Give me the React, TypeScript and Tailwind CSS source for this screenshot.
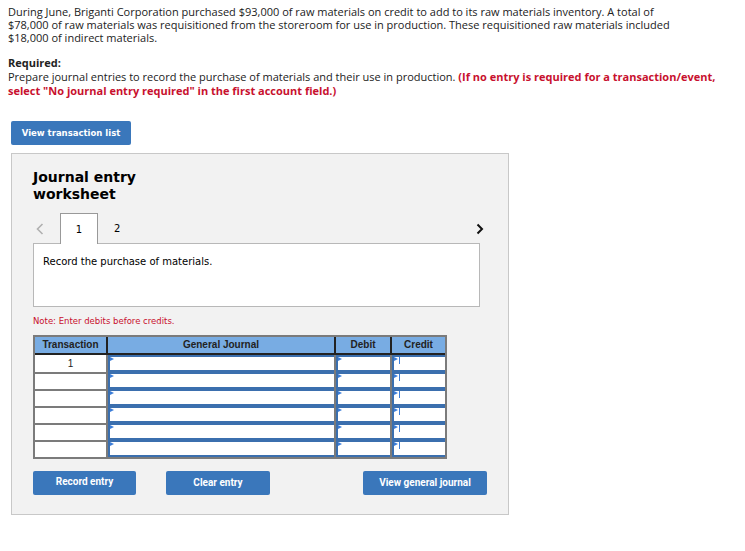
import { Fragment } from "react";

const rows = [1, 2, 3, 4, 5, 6];

function InputCell({ credit }: { credit?: boolean }) {
  return (
    <div className="relative h-[17px] w-full border-t-2 border-b-2 border-l-2 border-[#3b6fae] bg-white">
      <span className="absolute left-0 top-0 h-0 w-0 border-y-[2px] border-l-[4px] border-y-transparent border-l-[#3b7dd8]" />
      {credit && <span className="absolute left-[5px] top-0 h-[7px] w-px bg-[#3b7dd8]" />}
    </div>
  );
}

export default function App() {
  return (
    <div className="min-h-[551px] w-[745px] bg-white font-['Open_Sans',sans-serif] text-[11px] text-[#222]">
      <div className="whitespace-nowrap px-2 pt-[5px]">
        <p className="leading-[13px]">
          During June, Briganti Corporation purchased $93,000 of raw materials on credit to add to its raw materials
          inventory. A total of
          <br />
          $78,000 of raw materials was requisitioned from the storeroom for use in production. These requisitioned
          raw materials included
          <br />
          $18,000 of indirect materials.
        </p>
        <p className="mt-[12px] font-bold leading-[14px]">Required:</p>
        <p className="leading-[14px]">
          Prepare journal entries to record the purchase of materials and their use in production.{" "}
          <span className="font-bold text-[#c8102e]">
            (If no entry is required for a transaction/event,
            <br />
            select "No journal entry required" in the first account field.)
          </span>
        </p>
      </div>

      <div className="pl-[11px] pt-[23px]">
        <button className="h-[24px] w-[120px] rounded-[2px] bg-[#3a77bb] font-['DejaVu_Sans',sans-serif] text-[8.5px] font-bold text-white">
          View transaction list
        </button>

        <div className="mt-[8px] h-[362px] w-[498px] border border-[#c8c8c8] bg-[#f2f2f2] px-[21px] pt-[15px]">
          <h2 className="font-['DejaVu_Sans',sans-serif] text-[14px] font-bold leading-[17px] text-black">
            Journal entry
            <br />
            worksheet
          </h2>

          <div className="mt-[10px] flex h-[31px] w-[447px] items-center">
            <svg width="8" height="12" viewBox="0 0 8 12" className="ml-[3px] mr-[16px]">
              <path d="M6.5 1 L1.5 6 L6.5 11" fill="none" stroke="#b0b0b0" strokeWidth="1.6" />
            </svg>
            <div className="flex h-[31px] w-[38px] items-center justify-center border border-b-0 border-[#999] bg-white font-['DejaVu_Sans',sans-serif] text-[10px] text-black">
              1
            </div>
            <span className="ml-[16px] font-['DejaVu_Sans',sans-serif] text-[10px] text-black">2</span>
            <svg width="8" height="12" viewBox="0 0 8 12" className="ml-auto mr-[-4px]">
              <path d="M1.5 1.5 L6 6 L1.5 10.5" fill="none" stroke="#111" strokeWidth="2" />
            </svg>
          </div>

          <div className="-mt-px h-[64px] w-[447px] border border-[#b8b8b8] bg-white px-[9px] pt-[10px] font-['DejaVu_Sans',sans-serif] text-[10px] text-black">
            Record the purchase of materials.
          </div>

          <p className="mt-[8px] font-['DejaVu_Sans',sans-serif] text-[8.5px] text-[#c8102e]">
            Note: Enter debits before credits.
          </p>

          <div className="mt-[7px] w-[414px] border-2 border-[#7b7b7b] font-['Liberation_Sans',sans-serif]">
            <div className="grid h-[18px] grid-cols-[71px_228px_56px_55px] bg-[#78ace3] text-[10px] font-bold text-[#222]">
              <div className="flex items-center justify-center border-b-2 border-[#222]">Transaction</div>
              <div className="flex items-center justify-center border-b-2 border-l-2 border-[#222]">General Journal</div>
              <div className="flex items-center justify-center border-b-2 border-l-2 border-[#222]">Debit</div>
              <div className="flex items-center justify-center border-b-2 border-l-2 border-[#222]">Credit</div>
            </div>
            <div className="grid grid-cols-[71px_228px_56px_55px]">
              {rows.map((r) => (
                <Fragment key={r}>
                  <div
                    className={`flex h-[17px] justify-center bg-white pt-[1px] text-[10px] text-[#222] ${
                      r > 1 ? "border-t-2 border-[#7b7b7b]" : ""
                    }`}
                  >
                    {r === 1 ? "1" : ""}
                  </div>
                  <div className="border-l-2 border-[#7b7b7b]">
                    <InputCell />
                  </div>
                  <div className="border-l-2 border-[#7b7b7b]">
                    <InputCell />
                  </div>
                  <div className="border-l-2 border-[#7b7b7b]">
                    <InputCell credit />
                  </div>
                </Fragment>
              ))}
            </div>
          </div>

          <div className="mt-[12px] flex items-start font-['Roboto',sans-serif] text-[10px] font-bold text-white">
            <button className="h-[24px] w-[103px] rounded-[2px] bg-[#3a77bb] pb-[2px]">Record entry</button>
            <button className="ml-[30px] h-[24px] w-[104px] rounded-[2px] bg-[#3a77bb]">Clear entry</button>
            <button className="ml-[93px] h-[24px] w-[124px] rounded-[2px] bg-[#3a77bb]">View general journal</button>
          </div>
        </div>
      </div>
    </div>
  );
}
